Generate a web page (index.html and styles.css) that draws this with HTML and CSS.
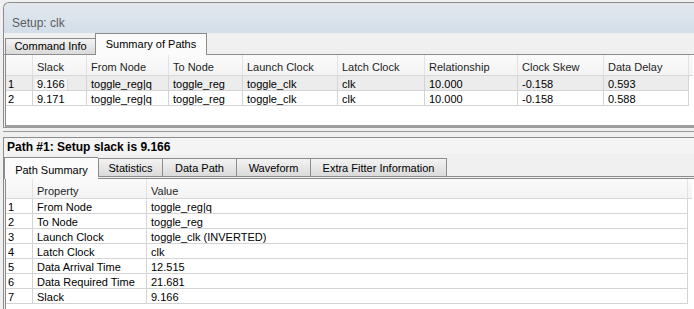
FILE: index.html
```html
<!DOCTYPE html>
<html lang="en">
<head>
    <meta charset="UTF-8">
    <title>Setup: clk</title>
    <link rel="stylesheet" href="styles.css">
</head>
<body>
    <!-- Ventana superior: resumen de caminos -->
    <div class="window">
        <div class="titlebar">Setup: clk</div>
        <div class="tabbar">
            <div class="tab">Command Info</div>
            <div class="tab active">Summary of Paths</div>
        </div>
        <div class="grid summary">
            <div class="hd"></div>
            <div class="hd">Slack</div>
            <div class="hd">From Node</div>
            <div class="hd">To Node</div>
            <div class="hd">Launch Clock</div>
            <div class="hd">Latch Clock</div>
            <div class="hd">Relationship</div>
            <div class="hd">Clock Skew</div>
            <div class="hd">Data Delay</div>
            <div class="hd filler"></div>

            <div class="cell num sel">1</div>
            <div class="cell sel"><span class="focus">9.166</span></div>
            <div class="cell sel">toggle_reg|q</div>
            <div class="cell sel">toggle_reg</div>
            <div class="cell sel">toggle_clk</div>
            <div class="cell sel">clk</div>
            <div class="cell sel">10.000</div>
            <div class="cell sel">-0.158</div>
            <div class="cell sel">0.593</div>
            <div class="blank"></div>

            <div class="cell num">2</div>
            <div class="cell">9.171</div>
            <div class="cell">toggle_reg|q</div>
            <div class="cell">toggle_reg</div>
            <div class="cell">toggle_clk</div>
            <div class="cell">clk</div>
            <div class="cell">10.000</div>
            <div class="cell">-0.158</div>
            <div class="cell">0.588</div>
            <div class="blank"></div>
        </div>
    </div>

    <!-- Separador -->
    <div class="splitter"></div>

    <!-- Panel inferior: detalle del camino -->
    <div class="panel">
        <div class="panel-title">Path #1: Setup slack is 9.166</div>
        <div class="tabbar low">
            <div class="tab active">Path Summary</div>
            <div class="tab">Statistics</div>
            <div class="tab">Data Path</div>
            <div class="tab">Waveform</div>
            <div class="tab">Extra Fitter Information</div>
        </div>
        <div class="grid props">
            <div class="hd"></div>
            <div class="hd">Property</div>
            <div class="hd">Value</div>
            <div class="hd filler"></div>

            <div class="cell num">1</div><div class="cell">From Node</div><div class="cell">toggle_reg|q</div><div class="blank"></div>
            <div class="cell num">2</div><div class="cell">To Node</div><div class="cell">toggle_reg</div><div class="blank"></div>
            <div class="cell num">3</div><div class="cell">Launch Clock</div><div class="cell">toggle_clk (INVERTED)</div><div class="blank"></div>
            <div class="cell num">4</div><div class="cell">Latch Clock</div><div class="cell">clk</div><div class="blank"></div>
            <div class="cell num">5</div><div class="cell">Data Arrival Time</div><div class="cell">12.515</div><div class="blank"></div>
            <div class="cell num">6</div><div class="cell">Data Required Time</div><div class="cell">21.681</div><div class="blank"></div>
            <div class="cell num">7</div><div class="cell">Slack</div><div class="cell">9.166</div><div class="blank"></div>
        </div>
    </div>
</body>
</html>
```

FILE: styles.css
```css
/* Estilo global */
* {
    box-sizing: border-box;
}

body {
    margin: 0;
    background: #f0f0f0;
    font-family: "Liberation Sans", Arial, sans-serif;
    font-size: 11px;
    line-height: 13px;
    color: #000;
    width: 694px;
    height: 309px;
    overflow: hidden;
}

/* Ventana superior */
.window {
    margin: 2px 0 0 3px;
    border-left: 1px solid #8c8c8c;
    border-top: 1px solid #8c8c8c;
    border-top-left-radius: 6px;
    background: #f0f0f0;
}

.titlebar {
    height: 30px;
    padding: 14px 0 0 8px;
    font-size: 12px;
    color: #5c5c5c;
    background: linear-gradient(#e2e8ee, #d3dee9);
    border-top-left-radius: 6px;
}

/* Barra de pestañas */
.tabbar {
    display: flex;
    align-items: flex-end;
    height: 22px;
    padding-left: 1px;
    background: #f0f0f0;
    border-bottom: 1px solid #8c8c8c;
}

.tab {
    height: 16px;
    padding: 1px 0 0;
    text-align: center;
    color: #000;
    border: 1px solid #8c8c8c;
    border-bottom: none;
    border-right: none;
    background: linear-gradient(#f3f3f3, #dadada);
}

.tabbar .tab:nth-child(1) { width: 90px; }
.tabbar .tab:nth-child(2) { width: 112px; }

.tab.active {
    height: 22px;
    padding-top: 4px;
    background: #fbfbfb;
    border-right: 1px solid #8c8c8c;
    margin-bottom: -1px;
}

/* Cuadrículas */
.grid {
    display: grid;
    background: #fff;
    border-left: 1px solid #8c8c8c;
    align-content: start;
}

.summary {
    margin-left: 1px;
    grid-template-columns: 27px 54px 82px 74px 95px 87px 93px 86px 85px 4px;
    grid-template-rows: 21px 15px 15px;
    height: 72px;
    border-bottom: 2px solid #a0a0a0;
}

.hd {
    padding: 6px 0 0 4px;
    line-height: 12px;
    background: linear-gradient(#fbfbfb, #f3f3f3);
    border-right: 1px solid #e2e2e2;
    border-bottom: 1px solid #d8d8d8;
    color: #1e1e1e;
    white-space: nowrap;
}

.hd.filler {
    border-right: none;
    padding: 0;
}

.cell {
    padding: 3px 0 0 4px;
    line-height: 11px;
    border-right: 1px solid #d4d4d4;
    border-bottom: 1px solid #d4d4d4;
    white-space: nowrap;
    overflow: hidden;
}

.cell.num {
    padding-left: 2px;
}

.cell.sel {
    background: #ececec;
}

.focus {
    display: inline-block;
    margin-left: -2px;
    padding: 0 2px;
    background: #f6f6f6;
    border-right: 1px solid #dcdcdc;
}

.blank {
    background: #fff;
}

/* Separador entre paneles */
.splitter {
    height: 10px;
    margin-left: 3px;
    border-top: 1px solid #9a9a9a;
    background: linear-gradient(#f0f0f0 3px, #9a9a9a 3px, #9a9a9a 4px, #f0f0f0 4px);
}

/* Panel inferior */
.panel {
    margin-left: 3px;
    border-left: 1px solid #8c8c8c;
}

.panel-title {
    height: 17px;
    padding: 3px 0 0 3px;
    font-weight: bold;
    font-size: 12px;
    border-top: 1px solid #8c8c8c;
    background: #f4f4f4;
}

.tabbar.low {
    height: 25px;
    padding-left: 0;
    border-bottom: 3px double #8c8c8c;
}

.tabbar.low .tab {
    height: 18px;
    padding-top: 3px;
}

.tabbar.low .tab:nth-child(1) { width: 94px; }
.tabbar.low .tab:nth-child(2) { width: 64px; }
.tabbar.low .tab:nth-child(3) { width: 74px; }
.tabbar.low .tab:nth-child(4) { width: 74px; }
.tabbar.low .tab:nth-child(5) { width: 137px; border-right: 1px solid #8c8c8c; }

.tabbar.low .tab.active {
    height: 22px;
    padding-top: 6px;
    margin-bottom: -3px;
    border-right: none;
}

.props {
    margin-left: 1px;
    grid-template-columns: 27px 114px 541px 4px;
    grid-template-rows: 20px repeat(7, 15px);
    height: 130px;
}
```
